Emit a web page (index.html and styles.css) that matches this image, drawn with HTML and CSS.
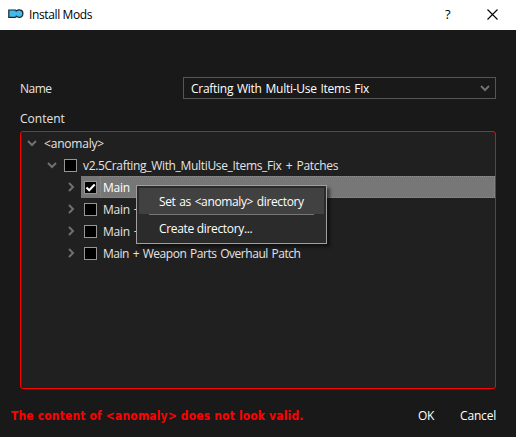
FILE: index.html
```html
<!DOCTYPE html>
<html lang="en">
<head>
<meta charset="utf-8">
<title>Install Mods</title>
<link rel="stylesheet" href="styles.css">
</head>
<body>
<div class="window">
  <header class="titlebar">
    <svg class="logo" width="18" height="12" viewBox="0 0 18 12"><path d="M1.8 2H8.3L9.5 2.8Q11 1.5 13 1.9Q15.9 2.3 15.9 5.5Q15.9 9 12.8 9.3Q10.7 9.5 9.6 8.4L8 9.4H1.8Z" fill="#42b9ef" stroke="#18252c" stroke-width="1.2"/><path d="M8.5 3L9.6 4.2M9.6 7L8.7 8.2" stroke="#18252c" stroke-width=".5"/></svg>
    <span class="title">Install Mods</span>
    <span class="help">?</span>
    <svg class="close" width="11" height="11" viewBox="0 0 11 11"><path d="M.5 .5L10.5 10.5M10.5 .5L.5 10.5" stroke="#000" stroke-width="1.1"/></svg>
  </header>
  <main class="content">
    <div class="field">
      <label class="name-label">Name</label>
      <div class="combo"><span class="text combo-text">Crafting With Multi-Use Items Fix</span>
        <svg class="chev" width="10" height="7" viewBox="0 0 10 7"><path d="M1 1L5 5L9 1"/></svg></div>
    </div>
    <div class="content-label">Content</div>
    <div class="tree">
      <div class="row level0"><svg class="chev" width="10" height="7" viewBox="0 0 10 7"><path d="M1 1L5 5L9 1"/></svg><span class="text root-text">&lt;anomaly&gt;</span></div>
      <div class="row level1"><svg class="chev" width="10" height="7" viewBox="0 0 10 7"><path d="M1 1L5 5L9 1"/></svg><i class="check"></i><span class="text folder-text">v2.5Crafting_With_MultiUse_Items_Fix + Patches</span></div>
      <div class="row level2"><svg class="chev side" width="7" height="10" viewBox="0 0 7 10"><path d="M1 1L5 5L1 9"/></svg><div class="cell selected"><i class="check"><svg width="11" height="11" viewBox="0 0 11 11"><path d="M1.5 5.5L4.2 8.3L9.7 2.5" fill="none" stroke="#fff" stroke-width="2.1"/></svg></i><div class="focus"><span class="text main-text">Main</span></div></div></div>
      <div class="row level2"><svg class="chev side" width="7" height="10" viewBox="0 0 7 10"><path d="M1 1L5 5L1 9"/></svg><div class="cell"><i class="check"></i><span class="text main-text">Main +</span></div></div>
      <div class="row level2"><svg class="chev side" width="7" height="10" viewBox="0 0 7 10"><path d="M1 1L5 5L1 9"/></svg><div class="cell"><i class="check"></i><span class="text main-text">Main +</span></div></div>
      <div class="row level2"><svg class="chev side" width="7" height="10" viewBox="0 0 7 10"><path d="M1 1L5 5L1 9"/></svg><div class="cell"><i class="check"></i><span class="text weapon">Main + Weapon Parts Overhaul Patch</span></div></div>
    </div>
  </main>
  <footer class="footer">
    <strong class="error">The content of &lt;anomaly&gt; does not look valid.</strong>
    <span class="ok">OK</span><span class="cancel">Cancel</span>
  </footer>
  <div class="menu">
    <div class="item active"><span class="text set-text">Set as &lt;anomaly&gt; directory</span></div>
    <div class="separator"></div>
    <div class="item"><span class="text create-text">Create directory...</span></div>
  </div>
</div>
</body>
</html>
```
FILE: styles.css
```css
* { box-sizing: border-box; }
body { margin: 0; background: #191919; color: #e4e4e4; font: 12px/16px "Open Sans", "Noto Sans", sans-serif; }
.window { position: relative; width: 516px; height: 437px; display: flex; flex-direction: column; overflow: hidden; white-space: nowrap; }
.titlebar { height: 30px; background: #fff; color: #000; display: flex; align-items: center; padding: 0 18px 2px 7px; }
.logo { margin-right: 4px; }
.title { flex: 1; padding-top: 2px; letter-spacing: -.37px; }
.help { width: 7px; margin-right: 35px; font-size: 13px; font-weight: 500; }
.content { flex: 1; padding: 47px 20px 0; display: flex; flex-direction: column; }
.field { display: flex; align-items: center; height: 22px; }
.name-label { width: 163px; padding-top: 2px; letter-spacing: -.5px; }
.combo { flex: 1; height: 22px; border: 1px solid #555; color: #fff; display: flex; align-items: center; justify-content: space-between; padding: 0 5px 0 7px; }
.text { padding-top: 2px; }
.combo-text { padding-top: 1px; letter-spacing: -.27px; word-spacing: 1px; }
.root-text { letter-spacing: -.2px; }
.folder-text { letter-spacing: -.33px; word-spacing: 1.5px; }
.main-text { letter-spacing: -.25px; word-spacing: 1px; }
.weapon { letter-spacing: -.46px; word-spacing: 1px; }
.set-text { letter-spacing: -.37px; word-spacing: 1px; }
.create-text { letter-spacing: -.33px; }
.chev { flex: none; fill: none; stroke: #707070; stroke-width: 2; }
.content-label { margin-top: 12px; height: 20px; }
.tree { height: 258px; border: 1px solid #f00; border-radius: 3px; background: #202020; }
.row { height: 22px; display: flex; align-items: center; }
.level0 { padding-left: 6px; }
.level0 .chev { margin-right: 7px; }
.level1 { padding-left: 26px; }
.level1 .chev { margin-right: 7px; }
.level2 { padding-left: 47px; }
.side { margin-right: 6px; }
.check { flex: none; width: 13px; height: 13px; margin-right: 6px; border: 1px solid #969696; background: #000; display: flex; }
.cell { flex: 1; height: 22px; padding-left: 3px; display: flex; align-items: center; }
.selected { background: #777; color: #fff; }
.selected .check { margin-right: 3px; }
.focus { flex: 1; height: 22px; padding-left: 2px; border: 1px dotted #8c8c8c; display: flex; align-items: center; }
.footer { height: 48px; padding: 5px 20px 0 11px; display: flex; align-items: center; color: #fff; }
.error { color: #f00; flex: 1; font-family: "DejaVu Sans Condensed", "DejaVu Sans", sans-serif; font-stretch: condensed; letter-spacing: .15px; }
.ok { margin-right: 26px; letter-spacing: -.3px; }
.cancel { letter-spacing: -.2px; }
.menu { position: absolute; left: 136px; top: 185px; width: 191px; height: 59px; padding: 2px; border: 1px solid #a0a0a0; background: #2b2b2b; color: #fff; box-shadow: 3px 3px 3px rgba(0,0,0,.5); }
.item { height: 26px; padding-left: 20px; display: flex; align-items: center; }
.active { background: #414141; }
.separator { height: 1px; margin: 0 10px; background: #777; }
```
